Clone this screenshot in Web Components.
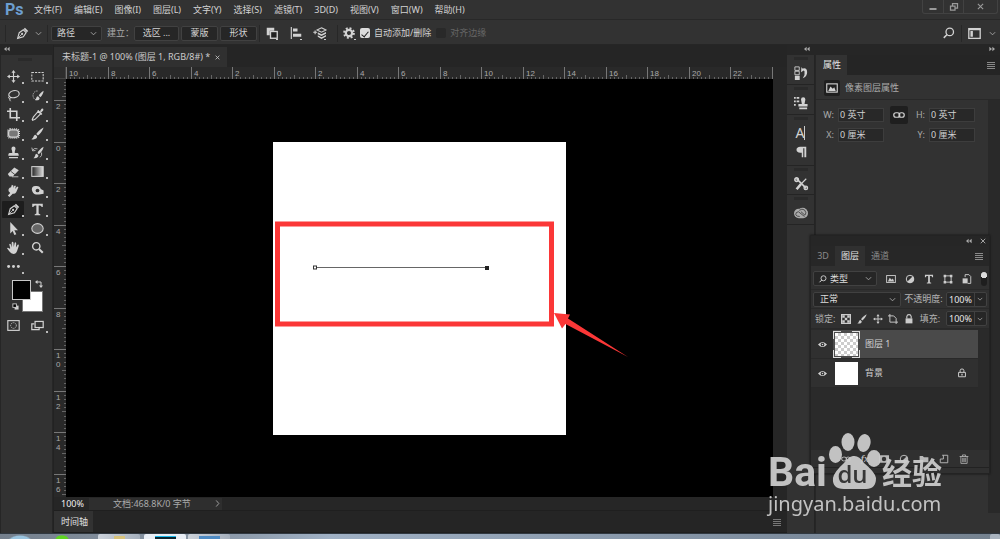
<!DOCTYPE html>
<html lang="zh-CN">
<head>
<meta charset="utf-8">
<title>未标题-1 @ 100%</title>
<style>
  html, body { margin: 0; height: 100%; background: #262626; overflow: hidden; }
  body { font: 9px/12px "Noto Sans", "Noto Sans CJK SC", sans-serif; color: #d2d2d2; }
</style>
</head>
<body>
<ps-app></ps-app>

<script>
const ICONS = {
  pen: '<path d="M2 14L4 7 9 3.500 12.500 7 9 12Z" fill="none" stroke="currentColor" stroke-width="1.400"/><path d="M2.500 13.500L7 9"  stroke="currentColor"/><circle cx="7.500" cy="8.500" r="1.300"/><path d="M9.500 2.500L11 1 15 5 13.500 6.500Z"/>',
  move: '<path d="M8 0L10.500 3.500H8.700V7.300H12.500V5.500L16 8 12.500 10.500V8.700H8.700V12.500H10.500L8 16 5.500 12.500H7.300V8.700H3.500V10.500L0 8 3.500 5.500V7.300H7.300V3.500H5.500Z"/>',
  marquee: '<rect x="1" y="3" width="14" height="10.500" fill="none" stroke="currentColor" stroke-width="1.300" stroke-dasharray="2.600 1.400"/>',
  lasso: '<ellipse cx="8.500" cy="6.500" rx="6.500" ry="4.300" transform="rotate(-12 8 6)" fill="none" stroke="currentColor" stroke-width="1.400"/><path d="M3 9C1 10 2 12.500 4 11.500S3 9 3 9M3.500 12Q3 14 4.500 15" fill="none" stroke="currentColor" stroke-width="1.200"/>',
  quick: '<path d="M8 2.500A5 5.500 0 1 0 7 13.500" fill="none" stroke="currentColor" stroke-dasharray="1.600 1.200"/><path d="M15.500 2C13 3.500 10.500 6 9.500 8L11.500 10C13.500 8 15.500 5 15.500 2ZM8.500 9C6 9.500 7 12 5 13.500 8 14.500 11 13.500 10.500 11Z"/>',
  crop: '<path d="M0 4H12V16M4 0V12H16" fill="none" stroke="currentColor" stroke-width="2"/>',
  dropper: '<path d="M9 4L12 7 5 14 2 15 1.500 14 3 11Z" fill="none" stroke="currentColor" stroke-width="1.400"/><path d="M9 2.500L14 7.500 12.500 8.500 7.500 3.800ZM11 4L13 1Q16 0 15 3L12.500 5.500Z"/>',
  heal: '<rect x="2" y="3.500" width="12" height="9" rx="3" fill="#777" stroke="currentColor" stroke-width="1.500"/><rect x="1" y="2.500" width="14" height="11" rx="3" fill="none" stroke="currentColor" stroke-width="2" stroke-dasharray="1.200 1.200"/>',
  brush: '<path d="M15.500 .500C11 3 8 6 6.500 8.500L8.500 10.500C11.500 8 14.500 4.500 15.500 .500ZM5.500 9.500C2.500 10 4 13 .500 15 5 16 8 14 7.500 11.500Z"/>',
  stamp: '<path d="M5.500 3A2.500 2.500 0 0 1 10.500 3C10.500 5 9.500 5 9.500 8.500H13Q14.500 8.500 14.500 12H1.500Q1.500 8.500 3 8.500H6.500C6.500 5 5.500 5 5.500 3ZM2.500 13.500H13.500V15H2.500Z"/>',
  history: '<path d="M15.500 1C12 3 9 6 8 8.500L9.500 10C12.500 8 15 5 15.500 1ZM7 9.500C4.500 10 6 12.500 3 15 7 15.500 9.500 14 9 11.500Z"/><path d="M2 5Q4 2 8 3.500M1 2L2 6 5.500 5.500M13 8Q14 12 11 14" fill="none" stroke="currentColor"/>',
  eraser: '<path d="M1 11L9 3 14.500 6.500 7 14H3Z"/><path d="M5 8L10 12" stroke="#333"/><path d="M6 14.500H14" stroke="currentColor"/>',
  gradient: '<defs><linearGradient id="g"><stop stop-color="#222"/><stop offset="1" stop-color="#ddd"/></linearGradient></defs><rect x="1" y="2" width="14" height="12" fill="url(#g)" stroke="currentColor" stroke-width="1.300"/>',
  smudge: '<path d="M2 9Q1 5 5 4L6 1 8 2 7.500 5 9 2 11 2 10 6 12.500 3 14 4 12 8.500Q11 12 7 12L3 16 1 14 4 11Z"/>',
  sponge: '<path d="M1 7Q1 2 6 2.500 11 2 12 6L15.500 8V12L10 13H6Q2 12 1 7Z"/><circle cx="8" cy="8" r="2.300" fill="#333"/>',
  type: '<path d="M1.500 1H14.500V5H13Q13 3 11 3H9.400V13L11.500 14V15H4.500V14L6.600 13V3H5Q3 3 3 5H1.500Z"/>',
  arrow: '<path d="M4 0L13.500 10H9L11.500 15 9 16 7 11 4 14Z"/>',
  ellipse: '<ellipse cx="8" cy="8" rx="7" ry="6" fill="#666" stroke="currentColor" stroke-width="1.300"/>',
  hand: '<path d="M4 9L2.700 4Q4 2.500 5 5L6 8 5.700 2Q6.800 0 8 2L8.300 7.500 9.500 2Q11 .500 11.300 3L11 8 13 4.500Q15 4 14.500 6L12.500 12Q11 16 8 16 5 16 3 13L0 9Q1 7.500 3 9.500Z"/>',
  zoom: '<circle cx="6.500" cy="6.500" r="4.500" fill="none" stroke="currentColor" stroke-width="1.700"/><path d="M10 10L14.500 14.500" stroke="currentColor" stroke-width="2.600"/>',
  search: '<circle cx="9" cy="6.500" r="5" fill="none" stroke="currentColor" stroke-width="1.700"/><path d="M5.500 10L1 14.500" stroke="currentColor" stroke-width="2"/>',
  dots: '<circle cx="2" cy="8" r="1.800"/><circle cx="8" cy="8" r="1.800"/><circle cx="14" cy="8" r="1.800"/>',
  mask: '<rect x="1" y="2" width="14" height="12" fill="none" stroke="currentColor" stroke-width="1.400"/><circle cx="8" cy="8" r="3.500" fill="none" stroke="currentColor" stroke-dasharray="1.500 1"/>',
  screen: '<path d="M4 6H1V13H10V11" fill="none" stroke="currentColor" stroke-width="1.500"/><rect x="5" y="3" width="10" height="7.500" fill="none" stroke="currentColor" stroke-width="1.500"/>',
  swap: '<path d="M4 4H12V12" fill="none" stroke="currentColor" stroke-width="2"/><path d="M5 0V8L0 4ZM8 11H16L12 16Z"/>',
  reset: '<rect x="6" y="6" width="9" height="9"/><rect x="2" y="2" width="8" height="8" fill="#000" stroke="currentColor" stroke-width="2"/>',
  chevron: '<path d="M2 5L8 11 14 5" fill="none" stroke="#aaa" stroke-width="2"/>',
  next: '<path d="M5 1L11 8 5 15" fill="none" stroke="currentColor" stroke-width="2"/>',
  close: '<path d="M2 2L14 14M14 2L2 14" stroke="currentColor" stroke-width="2.500"/>',
  min: '<path d="M1 10H15V14H1Z"/>',
  restore: '<path d="M5 7V1H15V10H10M1 6H10V14H1Z" fill="none" stroke="currentColor" stroke-width="2.500"/>',
  left: '<path d="M7 2V14L0 8ZM15 2V14L8 8Z"/>',
  right: '<path d="M9 2V14L16 8ZM1 2V14L8 8Z"/>',
  menu: '<path d="M0 2H16V4H0ZM0 6H16V8H0ZM0 10H16V12H0ZM0 14H16V16H0Z"/>',
  combine: '<path d="M1 1H11V5H5V11H1Z"/><rect x="6" y="6" width="9" height="9" fill="#222" stroke="currentColor" stroke-width="1.800"/>',
  align: '<path d="M1 0H2.500V16H1ZM4 2H10V6H4ZM4 9H15V13H4Z"/>',
  stack: '<path d="M-1 7H4M1.500 4.500V9.500" stroke="currentColor" stroke-width="1.500"/><path d="M10 1L16 4 10 7 4 4Z" fill="none" stroke="currentColor" stroke-width="1.400"/><path d="M5 7L10 9.500 16 6.500V9L10 12 5 9.500ZM5 11L10 13.500 16 10.500V12.500L10 16 5 13Z"/>',
  gear: '<circle cx="8" cy="8" r="4.200" fill="none" stroke="currentColor" stroke-width="3"/><circle cx="8" cy="8" r="6.500" fill="none" stroke="currentColor" stroke-width="2.600" stroke-dasharray="2.600 2.500"/>',
  workspace: '<rect x="1" y="2" width="14" height="12" fill="none" stroke="currentColor" stroke-width="1.600"/><path d="M3 5H6V12H3ZM1 2H15V4H1Z"/>',
  states: '<path d="M1 1H6V5H1ZM1 6H6V10H1Z" fill="none" stroke="currentColor"/><path d="M1 11H6.500V16H1ZM8.500 1L11 5 8 7ZM9 3Q15 1 15 7 15 12 10 14 13 10 12 6Z"/>',
  source: '<path d="M0 1H2V3H0ZM3 1H6V3H3ZM0 5H2V7H0ZM3 5H6V7H3ZM0 9H2V11H0Z"/><path d="M8 4A2.500 2.500 0 0 1 13 4L12 9H15.500V12H5V9H9ZM6 13H15V15H6Z"/>',
  para: '<path d="M7 1H15V15H12.500V3H11V15H9V9H7Q2 8.500 2 5T7 1Z"/>',
  tools: '<path d="M3 2L14 13" stroke="currentColor" stroke-width="2"/><path d="M14 2L8 8" stroke="currentColor" stroke-width="1.300"/><path d="M8 8L3 14" stroke="currentColor" stroke-width="3"/><circle cx="3" cy="3" r="2" fill="none" stroke="currentColor" stroke-width="1.800"/><circle cx="13.500" cy="12.500" r="2" fill="none" stroke="currentColor" stroke-width="1.500"/>',
  cloud: '<rect x="0" y="3" width="16" height="11" rx="5.500" fill="#aaa"/><circle cx="10" cy="7.500" r="5.500" fill="#aaa"/><path d="M12 12L5 6.500Q1.500 7 2 10 3 12 6.500 12M6 5Q9 2.500 12 4.500 15 8 12.500 10.500L8 6.500" fill="none" stroke="#4a4a4a" stroke-width="1.100"/>',
  picture: '<rect x="1" y="2.500" width="14" height="11" fill="none" stroke="currentColor" stroke-width="1.500"/><path d="M3 12L6 6 9 9 11 7 13 12Z"/>',
  link: '<rect x="1" y="5" width="8" height="6" rx="3" fill="none" stroke="currentColor" stroke-width="1.600"/><rect x="8" y="5" width="7" height="6" rx="3" fill="none" stroke="currentColor" stroke-width="1.600"/>',
  adjust: '<circle cx="8" cy="8" r="6" fill="none" stroke="currentColor" stroke-width="1.600"/><path d="M12.500 3.500A6 6 0 0 1 3.500 12.500Z"/>',
  shape: '<path d="M3 3H13V13H3Z" fill="none" stroke="currentColor" stroke-width="1.500"/><path d="M1 1H5V5H1ZM11 1H15V5H11ZM1 11H5V15H1ZM11 11H15V15H11Z"/>',
  smart: '<path d="M5 5V1H11L14 4V15H9" fill="none" stroke="currentColor" stroke-width="1.500"/><path d="M1 7H9V15H1Z"/>',
  checker: '<path d="M1 1H15V15H1Z" fill="none" stroke="currentColor" stroke-width="2"/><path d="M2 2H6V6H2ZM10 2H14V6H10ZM6 6H10V10H6ZM2 10H6V14H2ZM10 10H14V14H10Z"/>',
  artboard: '<path d="M3 0V13H16M0 3H9M13 7V16M9 3L13 7" fill="none" stroke="currentColor" stroke-width="1.500"/>',
  lock: '<path d="M4.500 7V4Q5 1 8 1T11.500 4V7" fill="none" stroke="currentColor" stroke-width="1.800"/><path d="M2.500 7H13.500V15H2.500Z"/>',
  locked: '<path d="M5 7V4Q5 1.500 8 1.500T11 4V7M2.500 7H13.500V14H2.500Z" fill="none" stroke="currentColor" stroke-width="1.500"/><path d="M7 9H9V12H7Z"/>',
  eye: '<path d="M0 8Q8-1 16 8 8 17 0 8Z"/><circle cx="8" cy="8" r="3.300" fill="#2e2e2e"/><circle cx="8" cy="8" r="1.300"/>',
  addmask: '<path d="M0 2H16V14H0Z"/><circle cx="8" cy="8" r="3.500" fill="#333"/>',
  folder: '<path d="M1 3H6L8 5H15V13H1Z"/>',
  newlayer: '<path d="M5 2H14V14H2V8H7V2" fill="none" stroke="currentColor" stroke-width="1.500"/>',
  trash: '<path d="M1 4H15M5.500 4V1.500H10.500V4M3 4V15H13V4M6 6V13M8 6V13M10 6V13" fill="none" stroke="currentColor" stroke-width="1.300"/>'
};

/* Each element's shadow root is cloned from its own template. */
function define(name, html, setup) {
  const template = document.createElement('template');
  template.innerHTML = `<style>
    *, *::before { box-sizing: border-box; }
    button, input, select { font: inherit; color: inherit; margin: 0; padding: 0; border: 0; background: none; outline: 0; min-width: 0; }
    button { display: flex; align-items: center; justify-content: center; white-space: nowrap; }
    select { appearance: none; }
  </style>` + html;
  customElements.define(name, class extends HTMLElement {
    connectedCallback() {
      if (this.shadowRoot) return;
      const root = this.attachShadow({ mode: 'open' });
      root.append(template.content.cloneNode(true));
      if (setup) setup(this, root);
    }
  });
}

define('ps-icon', `<style>
  :host { display: block; flex: none; width: var(--size, 14px); height: var(--size, 14px); }
  svg { display: block; width: 100%; height: 100%; fill: currentColor; overflow: visible; }
</style><svg viewBox="0 0 16 16" aria-hidden="true"></svg>`, (host, root) => {
  root.querySelector('svg').innerHTML = ICONS[host.getAttribute('name')] || '';
});

/* Drop-down box: options are given as a comma-separated list. */
define('ps-select', `<style>
  :host { display: flex; align-items: center; height: 15px; background: #262626; border: 1px solid #414141; border-radius: 2px; padding: 0 4px 0 5px; gap: 3px; box-sizing: border-box; }
  select { flex: 1; height: 13px; }
  ps-icon { --size: 7px; }
</style><slot></slot><select></select><ps-icon name="chevron"></ps-icon>`, (host, root) => {
  const select = root.querySelector('select');
  select.setAttribute('aria-label', host.getAttribute('label'));
  for (const text of host.getAttribute('options').split(',')) select.add(new Option(text));
});

define('ps-menu-bar', `<style>
  :host { display: flex; height: 20px; background: #323232; border-bottom: 1px solid #282828; padding-left: 5px; align-items: center; box-sizing: border-box; }
  b { font: bold 16px/19px Roboto, sans-serif; color: #6d9fd0; width: 29px; }
  nav { display: flex; gap: 12px; flex: 1; }
  .win { display: flex; align-self: flex-start; border: 1px solid #424242; border-top: 0; border-radius: 0 0 3px 3px; margin-right: 2px; color: #9a9a9a; --size: 8px; }
  .win button { width: 20px; height: 13px; border-left: 1px solid #424242; }
  .win button:first-child { border-left: 0; }
  .win button:last-child { width: 34px; --size: 7px; }
</style><b>Ps</b><nav></nav>
<div class="win"><button aria-label="最小化"><ps-icon name="min"></ps-icon></button><button aria-label="还原"><ps-icon name="restore"></ps-icon></button><button aria-label="关闭"><ps-icon name="close"></ps-icon></button></div>`, (host, root) => {
  root.querySelector('nav').innerHTML = ['文件(F)', '编辑(E)', '图像(I)', '图层(L)', '文字(Y)', '选择(S)', '滤镜(T)', '3D(D)', '视图(V)', '窗口(W)', '帮助(H)'].map(t => `<button>${t}</button>`).join('');
});

define('ps-options-bar', `<style>
  :host { display: flex; height: 25px; background: #323232; border-bottom: 1px solid #262626; align-items: center; padding: 2px 4px 0 5px; box-sizing: border-box; }
  .sep { width: 1px; height: 17px; background: #272727; flex: none; }
  .pen { gap: 6px; width: 41px; padding-left: 4px; --size: 13px; }
  .small { --size: 7px; }
  ps-select { width: 51px; margin: 0 5px 0 3px; }
  .make { color: #aaa; width: 27px; white-space: nowrap; }
  .box { background: #262626; border: 1px solid #414141; border-radius: 2px; height: 15px; width: 37px; margin-right: 2px; }
  .make + .box { width: 45px; }
  .drop { width: 24px; height: 16px; --size: 12px; background: linear-gradient(#ccc, #ccc) 16px 14px / 2px 1px no-repeat; }
  .icons { display: flex; margin-right: 5px; }
  .gear { width: 22px; --size: 12px; }
  label { display: flex; align-items: center; gap: 4px; white-space: nowrap; }
  label + label { margin-left: 5px; color: #666; }
  input { appearance: none; width: 10px; height: 10px; border-radius: 2px; background: #dcdcdc; display: grid; place-items: center; }
  input:checked::before { content: ""; width: 4px; height: 7px; border: solid #222; border-width: 0 1px 1px 0; transform: rotate(40deg); }
  input:disabled { background: #292929; }
  .right { margin-left: auto; display: flex; align-items: center; gap: 6px; }
  .search { --size: 12px; }
  .work { gap: 8px; --size: 13px; }
</style>
<span class="sep"></span><button class="pen" aria-label="钢笔工具"><ps-icon name="pen"></ps-icon><ps-icon class="small" name="chevron"></ps-icon></button><span class="sep"></span>
<ps-select label="工具模式" options="路径,形状,像素"></ps-select><span class="make">建立：</span>
<button class="box">选区 ...</button><button class="box">蒙版</button><button class="box">形状</button><span class="sep"></span>
<div class="icons"><button class="drop" aria-label="路径操作"><ps-icon name="combine"></ps-icon></button><button class="drop" aria-label="路径对齐方式"><ps-icon name="align"></ps-icon></button><button class="drop" aria-label="路径排列方式"><ps-icon name="stack"></ps-icon></button></div><span class="sep"></span>
<button class="drop gear" aria-label="设置"><ps-icon name="gear"></ps-icon></button>
<label><input type="checkbox" checked>自动添加/删除</label><label><input type="checkbox" disabled>对齐边缘</label>
<div class="right"><button class="search" aria-label="搜索"><ps-icon name="search"></ps-icon></button><span class="sep"></span><button class="work" aria-label="工作区"><ps-icon name="workspace"></ps-icon><ps-icon class="small" name="chevron"></ps-icon></button></div>`);

define('ps-toolbox', `<style>
  :host { display: flex; flex-direction: column; width: 52px; background: #323232; border-left: 1px solid #262626; flex: none; box-sizing: border-box; padding-left: 1px; }
  header { height: 10px; background: #262626; margin-left: -1px; padding: 1px 3px; --size: 6px; color: #aaa; }
  .grip { width: 14px; height: 3px; background: #2a2a2a; margin: 3px 0 7px 16px; }
  .tools { display: grid; grid-template-columns: 22px 22px; grid-auto-rows: 17px; gap: 2px; --size: 13px; }
  .tools button { background: linear-gradient(#bbb, #bbb) 20px 14px / 2px 2px no-repeat; }
  .tools .on { background-color: #1d1d1d; border-radius: 1px; }
  .tools .plain { background-image: none; }
  .colors { display: grid; grid-template-columns: 10px 9px 12px; grid-template-rows: 11px 9px 12px; margin: 5px 0 0 10px; width: 31px; }
  .back { grid-area: 2 / 2 / 4 / 4; background: #fff; border: 1px solid #777; }
  .fore { grid-area: 1 / 1 / 3 / 3; background: #000; border: 1px solid #c8c8c8; z-index: 1; }
  .swap { grid-area: 1 / 3; justify-self: end; align-self: start; --size: 8px; }
  .reset { grid-area: 3 / 1; justify-self: start; align-self: center; --size: 7px; }
  .modes { margin-top: 5px; }
</style><header><ps-icon name="left"></ps-icon></header><div class="grip"></div><div class="tools" id="tools"></div>
<div class="colors"><button class="fore" aria-label="前景色"></button><button class="back" aria-label="背景色"></button><button class="swap" aria-label="切换颜色"><ps-icon name="swap"></ps-icon></button><button class="reset" aria-label="默认颜色"><ps-icon name="reset"></ps-icon></button></div>
<div class="tools modes"><button class="plain" aria-label="快速蒙版"><ps-icon name="mask"></ps-icon></button><button aria-label="屏幕模式"><ps-icon name="screen"></ps-icon></button></div>`, (host, root) => {
  const names = 'move marquee lasso quick crop dropper heal brush stamp history eraser gradient smudge sponge pen type arrow ellipse hand zoom dots'.split(' ');
  root.getElementById('tools').innerHTML = names.map(n => `<button aria-label="${n}" class="${n === 'pen' ? 'on' : n === 'zoom' ? 'plain' : ''}"><ps-icon name="${n}"></ps-icon></button>`).join('');
});

/* Ruler: one cell for every two units, nine small ticks in each; "_" is a mark with no number. */
define('ps-ruler', `<style>
  :host { display: flex; overflow: hidden; background: #292929; color: #aaa; font: 8px/9px "Liberation Sans", sans-serif; min-width: 0; min-height: 0; }
  :host([vertical]) { flex-direction: column; }
  .cell { flex: none; display: grid; grid-template: 100% / 100%; width: 41px; height: 100%; border-left: 1px solid #777; }
  .cell:nth-child(even) { width: 42px; }
  .cell > * { grid-area: 1 / 1; }
  .label { padding: 2px 0 0 2px; }
  .ticks { display: flex; align-items: flex-end; justify-content: space-evenly; }
  i { width: 1px; height: 2px; background: #656565; }
  i:nth-child(5) { height: 4px; }
  :host([vertical]) .cell { width: 100%; height: 42px; border-left: 0; border-top: 1px solid #777; }
  :host([vertical]) .cell:nth-child(odd) { height: 41px; }
  :host([vertical]) .cell.lead { height: 21px; border: 0; }
  :host([vertical]) .label { padding: 1px 0 0 2px; }
  :host([vertical]) .ticks { flex-direction: column; }
  :host([vertical]) i { width: 2px; height: 1px; }
  :host([vertical]) i:nth-child(5) { width: 4px; }
</style>`, (host, root) => {
  const vertical = host.hasAttribute('vertical');
  const text = mark => mark === '_' ? '' : vertical ? [...mark].join('<br>') : mark;
  const cell = (mark, n, lead) => `<div class="cell ${lead}"><span class="label">${text(mark)}</span><span class="ticks">${'<i></i>'.repeat(n)}</span></div>`;
  root.lastElementChild.insertAdjacentHTML('afterend', (vertical ? cell('_', 5, 'lead') : '<b hidden></b>') + host.getAttribute('marks').split(' ').map(m => cell(m, 9, '')).join(''));
});

define('ps-canvas', `<style>
  :host { display: flex; align-items: center; justify-content: center; background: #000; overflow: hidden; min-width: 0; min-height: 0; }
  svg { flex: none; width: 293px; height: 293px; background: #fff; overflow: visible; }
</style>
<svg viewBox="0 0 293 293" role="img" aria-label="画布">
  <path d="M42 125.500H214" stroke="#666"/>
  <rect x="40.500" y="124" width="3" height="3" fill="#fff" stroke="#333"/><rect x="212" y="124" width="4" height="4" fill="#222"/>
  <rect x="4.500" y="82" width="274" height="100" fill="none" stroke="#fb3737" stroke-width="5"/>
  <path d="M281 171L297 172.500 295 176.500 355 215 292.500 182 289 186.500Z" fill="#fb3737"/>
</svg>`);

define('ps-document', `<style>
  :host { display: flex; flex-direction: column; flex: 1; min-width: 0; margin-left: 1px; border-left: 1px solid #222; box-sizing: border-box; }
  .tabs { display: flex; height: 22px; background: #252525; padding-top: 2px; }
  .tab { display: flex; align-items: center; gap: 5px; background: #303030; padding: 0 7px 0 8px; white-space: nowrap; --size: 5px; color: #ccc; }
  .view { flex: 1; display: grid; grid-template: 12px 1fr / 12px 1fr; min-height: 0; padding-right: 14px; }
  .corner { background: #2d2d2d; border: solid #444; border-width: 0 1px 1px 0; }
  .status { display: flex; height: 13px; align-items: center; background: #262626; }
  .status input { width: 35px; height: 12px; padding-left: 7px; color: #eee; }
  .info { display: flex; height: 12px; width: 133px; align-items: center; justify-content: space-between; background: #2e2e2e; padding: 0 1px 0 24px; color: #aaa; --size: 7px; white-space: nowrap; }
  .timeline { display: flex; height: 23px; background: #252525; border: solid #1f1f1f; border-width: 1px 0; align-items: stretch; justify-content: space-between; }
  .timeline button:first-child { background: #323232; padding: 0 5px 0 7px; color: #e0e0e0; }
  .timeline button:last-child { --size: 8px; padding-right: 6px; color: #777; }
</style>
<div class="tabs"><div class="tab"><span>未标题-1 @ 100% (图层 1, RGB/8#) *</span><button aria-label="关闭文档"><ps-icon name="close"></ps-icon></button></div></div>
<div class="view"><div class="corner"></div><ps-ruler marks="10 8 6 4 2 0 2 4 6 8 10 12 14 16 18 20 22 _"></ps-ruler>
<ps-ruler vertical marks="2 0 2 4 6 8 10 12 14 16"></ps-ruler><ps-canvas></ps-canvas></div>
<div class="status"><input aria-label="缩放" value="100%"><div class="info"><span>文档:468.8K/0 字节</span><button aria-label="更多信息"><ps-icon name="next"></ps-icon></button></div></div>
<div class="timeline"><button>时间轴</button><button aria-label="面板菜单"><ps-icon name="menu"></ps-icon></button></div>`);

define('ps-dock', `<style>
  :host { display: flex; flex-direction: column; width: 28px; flex: none; background: #323232; border-right: 1px solid #242424; box-sizing: border-box; }
  section { display: flex; flex-direction: column; align-items: center; gap: 6px; border-bottom: 1px solid #242424; --size: 14px; height: 30px; }
  section::before { content: ""; width: 14px; height: 3px; background: #2a2a2a; margin-top: 2px; }
  section.tall { height: 51px; --size: 12px; }
  section.tall + section { height: 29px; }
  .char { font: 14px/14px "Noto Sans", sans-serif; height: 14px; border-right: 1px solid #ccc; }
</style>
<section><button aria-label="历史记录"><ps-icon name="states"></ps-icon></button></section>
<section><button aria-label="仿制源"><ps-icon name="source"></ps-icon></button></section>
<section class="tall"><button class="char" aria-label="字符">A</button><button aria-label="段落"><ps-icon name="para"></ps-icon></button></section>
<section><button aria-label="工具预设"><ps-icon name="tools"></ps-icon></button></section>
<section><button aria-label="库"><ps-icon name="cloud"></ps-icon></button></section>`);

define('ps-properties', `<style>
  :host { display: flex; flex-direction: column; flex: 1; background: #323232; margin-left: 1px; min-width: 0; }
  header { display: flex; justify-content: space-between; background: #252525; height: 20px; }
  header button:first-child { background: #323232; padding: 0 6px 0 7px; color: #e2e2e2; }
  header button:last-child { --size: 8px; padding-right: 5px; color: #888; }
  .kind { display: flex; align-items: center; gap: 5px; height: 25px; border-bottom: 1px solid #282828; padding: 2px 0 0 8px; color: #aaa; }
  .kind span { background: #1f1f1f; padding: 2px; border-radius: 2px; --size: 12px; color: #d2d2d2; }
  .body { flex: 1; display: flex; }
  .fields { display: grid; grid-template-columns: 21px 46px 28px 14px 46px; grid-auto-rows: 15px; column-gap: 1px; row-gap: 5px; align-content: start; align-items: center; padding-top: 7px; flex: 1; }
  label { text-align: right; color: #aaa; padding-right: 3px; }
  input { background: #282828; border: 1px solid #3d3d3d; height: 14px; width: 46px; padding-left: 1px; }
  .link { width: 18px; height: 18px; background: #1f1f1f; border-radius: 2px; justify-self: center; --size: 12px; }
  .rail { width: 12px; background: #292929; margin-bottom: 20px; }
</style>
<header><button>属性</button><button aria-label="面板菜单"><ps-icon name="menu"></ps-icon></button></header>
<div class="kind"><span><ps-icon name="picture"></ps-icon></span>像素图层属性</div>
<div class="body"><div class="fields">
<label for="w">W:</label><input id="w" value="0 英寸"><button class="link" aria-label="链接"><ps-icon name="link"></ps-icon></button><label for="h">H:</label><input id="h" value="0 英寸">
<label for="x">X:</label><input id="x" value="0 厘米"><span></span><label for="y">Y:</label><input id="y" value="0 厘米">
</div><div class="rail"></div></div>`);

define('ps-percent', `<style>
  :host { display: flex; height: 15px; border: 1px solid #414141; background: #262626; border-radius: 2px; box-sizing: border-box; width: 41px; }
  input { width: 27px; text-align: center; height: 13px; color: #e6e6e6; }
  button { width: 12px; border-left: 1px solid #414141; --size: 6px; }
</style><input><button aria-label="调整"><ps-icon name="chevron"></ps-icon></button>`, (host, root) => {
  const input = root.querySelector('input');
  input.value = '100%';
  input.setAttribute('aria-label', host.getAttribute('label'));
});

define('ps-layer', `<style>
  :host { display: flex; align-items: center; height: 29px; border-bottom: 1px solid #292929; background: #303030; box-sizing: border-box; padding-right: 11px; }
  :host([selected]) { background: #4a4a4a; }
  .eye { width: 22px; align-self: stretch; background: #303030; --size: 9px; }
  .thumb { width: 27px; height: 27px; margin: 0 5px 0 0; display: grid; }
  .thumb::before, .thumb i { grid-area: 1 / 1; }
  .thumb i { margin: 2px; background: #fff; }
  :host([selected]) .thumb::before { content: ""; border: 1px solid #ddd; mask: repeating-conic-gradient(from 22deg, #000 0 46deg, transparent 0 90deg); }
  :host([selected]) .thumb i { background: conic-gradient(#ccc 25%, #fff 0 50%, #ccc 0 75%, #fff 0) 0 0 / 6px 6px; }
  .name { flex: 1; }
</style><button class="eye" aria-label="可见性"><ps-icon name="eye"></ps-icon></button><span class="thumb"><i></i></span><span class="name"><slot></slot></span><slot name="lock"></slot>`);

define('ps-layers', `<style>
  :host { display: flex; flex-direction: column; background: #303030; border: 1px solid #232323; box-sizing: border-box; box-shadow: 0 0 2px #111; }
  .title { display: flex; justify-content: flex-end; gap: 8px; height: 10px; background: #262626; padding-right: 3px; color: #aaa; --size: 6px; }
  .tabs { display: flex; height: 20px; background: #272727; color: #8a8a8a; }
  .tabs button { width: 30px; }
  .tabs button:first-child { width: 24px; }
  .tabs .on { background: #303030; color: #e2e2e2; }
  .tabs .menu { margin-left: auto; width: 20px; --size: 8px; }
  .row { display: flex; align-items: center; border-bottom: 1px solid #292929; height: 19px; padding: 0 2px; color: #b4b4b4; white-space: nowrap; justify-content: space-between; }
  .filter { height: 24px; padding-top: 2px; --size: 10px; color: #ccc; }
  .filter ps-select { width: 64px; --size: 8px; color: #ddd; }
  .switch { width: 6px; height: 14px; border-radius: 3px; background: radial-gradient(circle at 3px 3px, #ddd 3px, #1e1e1e 0); }
  .mode ps-select { width: 88px; padding-left: 6px; color: #ddd; }
  .lock { height: 20px; --size: 10px; padding-left: 4px; }
  .lock button { color: #ccc; }
  .list { flex: 1; background: #2a2a2a; padding: 1px 11px 0 0; }
  .list ps-icon { --size: 10px; }
  footer { display: flex; align-items: center; justify-content: flex-end; gap: 10px; height: 18px; padding-right: 20px; --size: 10px; color: #b8b8b8; border-bottom: 1px solid #222; }
  footer .fx { font: italic bold 10px/12px "Liberation Serif", serif; }
  .foot { height: 5px; background: #303030; }
</style>
<div class="title"><button aria-label="折叠"><ps-icon name="left"></ps-icon></button><button aria-label="关闭"><ps-icon name="close"></ps-icon></button></div>
<div class="tabs"><button>3D</button><button class="on">图层</button><button>通道</button><button class="menu" aria-label="面板菜单"><ps-icon name="menu"></ps-icon></button></div>
<div class="row filter"><ps-select label="滤镜类型" options="类型,名称,效果"><ps-icon name="search"></ps-icon></ps-select>
<button aria-label="像素"><ps-icon name="picture"></ps-icon></button><button aria-label="调整"><ps-icon name="adjust"></ps-icon></button><button aria-label="文字"><ps-icon name="type"></ps-icon></button><button aria-label="形状"><ps-icon name="shape"></ps-icon></button><button aria-label="智能对象"><ps-icon name="smart"></ps-icon></button><button class="switch" aria-label="滤镜开关"></button></div>
<div class="row mode"><ps-select label="混合模式" options="正常,溶解"></ps-select><span>不透明度:</span><ps-percent label="不透明度"></ps-percent></div>
<div class="row lock"><span>锁定:</span><button aria-label="锁定透明"><ps-icon name="checker"></ps-icon></button><button aria-label="锁定像素"><ps-icon name="brush"></ps-icon></button><button aria-label="锁定位置"><ps-icon name="move"></ps-icon></button><button aria-label="锁定画板"><ps-icon name="artboard"></ps-icon></button><button aria-label="锁定全部"><ps-icon name="lock"></ps-icon></button><span>填充:</span><ps-percent label="填充"></ps-percent></div>
<div class="list"><ps-layer selected>图层 1</ps-layer><ps-layer>背景<ps-icon slot="lock" name="locked"></ps-icon></ps-layer></div>
<footer><button aria-label="链接图层"><ps-icon name="link"></ps-icon></button><button class="fx">fx</button><button aria-label="蒙版"><ps-icon name="addmask"></ps-icon></button><button aria-label="调整图层"><ps-icon name="adjust"></ps-icon></button><button aria-label="新建组"><ps-icon name="folder"></ps-icon></button><button aria-label="新建图层"><ps-icon name="newlayer"></ps-icon></button><button aria-label="删除"><ps-icon name="trash"></ps-icon></button></footer><div class="foot"></div>`);

define('ps-watermark', `<style>
  :host { display: block; color: #ccc; opacity: .94; white-space: nowrap; }
  .logo { display: flex; align-items: flex-end; height: 56px; }
  .bai { font: bold 41px/41px Roboto, sans-serif; width: 60px; margin-bottom: -4px; }
  .paw { display: grid; width: 52px; height: 56px; margin-right: 2px; }
  .paw > * { grid-area: 1 / 1; }
  svg { width: 52px; height: 56px; fill: #ccc; }
  .du { color: #383838; font: 600 24px/24px "Open Sans", sans-serif; align-self: end; justify-self: center; margin-right: 3px; padding-bottom: 3px; }
  .cn { font: bold 30px/30px "Noto Sans CJK SC", sans-serif; margin-bottom: 3px; }
  .url { font: 20px/24px "Noto Sans", sans-serif; padding-top: 3px; }
</style>
<div class="logo"><span class="bai">Bai</span><span class="paw"><svg viewBox="0 0 52 56"><ellipse cx="7.500" cy="21.500" rx="6.500" ry="8.500"/><ellipse cx="20" cy="9" rx="6.500" ry="9"/><ellipse cx="36" cy="10" rx="6.500" ry="9" transform="rotate(12 36 10)"/><ellipse cx="46" cy="25.500" rx="7" ry="8.500"/><path d="M25 23Q31 22 36 30 47 39 48 45 48 56 38 56H16Q4 56 5 45 6 39 16 30 20 24 25 23Z"/></svg><span class="du">du</span></span><span class="cn">经验</span></div><div class="url">jingyan.baidu.com</div>`);

define('ps-taskbar', `<style>
  :host { display: flex; height: 6px; gap: 2px; background: linear-gradient(90deg, #75808d, #8f9dad 25%, #a0b1c5 33%, #7c8b9c 80%, #75828f); border-top: 1px solid #303840; overflow: hidden; box-sizing: border-box; }
  .start { width: 96px; flex: none; background: radial-gradient(ellipse 12px 6px at 20px 7px, #9ac4df 80%, transparent), radial-gradient(ellipse 7px 4px at 62px 5px, #5fd522 80%, transparent); }
  button { flex: none; height: 6px; width: 42px; background: linear-gradient(90deg, #ccd2da, #a6b0bd); border-radius: 2px 2px 0 0; }
  button.on { background: #e9eef5; margin-left: 2px; }
  span { width: 21px; height: 3px; background: #0b2530; border-top: 1px solid #18b9ed; }
  .files span { background: #d8c37b; width: 11px; border: 0; }
  .net span { background: #4e8bc4; border: 0; }
  .desk { width: 10px; margin-left: auto; background: #aab4bf; }
</style><div class="start"></div><button class="files" aria-label="文件夹"><span></span></button><button class="on" aria-label="Photoshop"><span></span></button><button class="net" aria-label="网络"><span></span></button><button class="desk" aria-label="显示桌面"></button>`);

define('ps-app', `<style>
  :host { display: flex; flex-direction: column; height: 100vh; position: relative; overflow: hidden; }
  main { display: flex; flex: 1; min-height: 0; }
  .side { display: flex; flex-direction: column; width: 213px; flex: none; }
  .strip { display: flex; justify-content: space-between; height: 10px; background: #262626; padding: 1px 5px 0 17px; --size: 6px; color: #aaa; }
  .panels { display: flex; flex: 1; min-height: 0; }
  ps-layers { position: absolute; right: 10px; top: 235px; width: 180px; height: 239px; }
  ps-watermark { position: absolute; right: 54px; bottom: 23px; width: 178px; pointer-events: none; }
</style>
<ps-menu-bar></ps-menu-bar><ps-options-bar></ps-options-bar>
<main><ps-toolbox></ps-toolbox><ps-document></ps-document><div class="side"><div class="strip"><ps-icon name="left"></ps-icon><ps-icon name="right"></ps-icon></div><div class="panels"><ps-dock></ps-dock><ps-properties></ps-properties></div></div></main>
<ps-taskbar></ps-taskbar><ps-layers></ps-layers><ps-watermark></ps-watermark>`);
</script>
</body>
</html>
